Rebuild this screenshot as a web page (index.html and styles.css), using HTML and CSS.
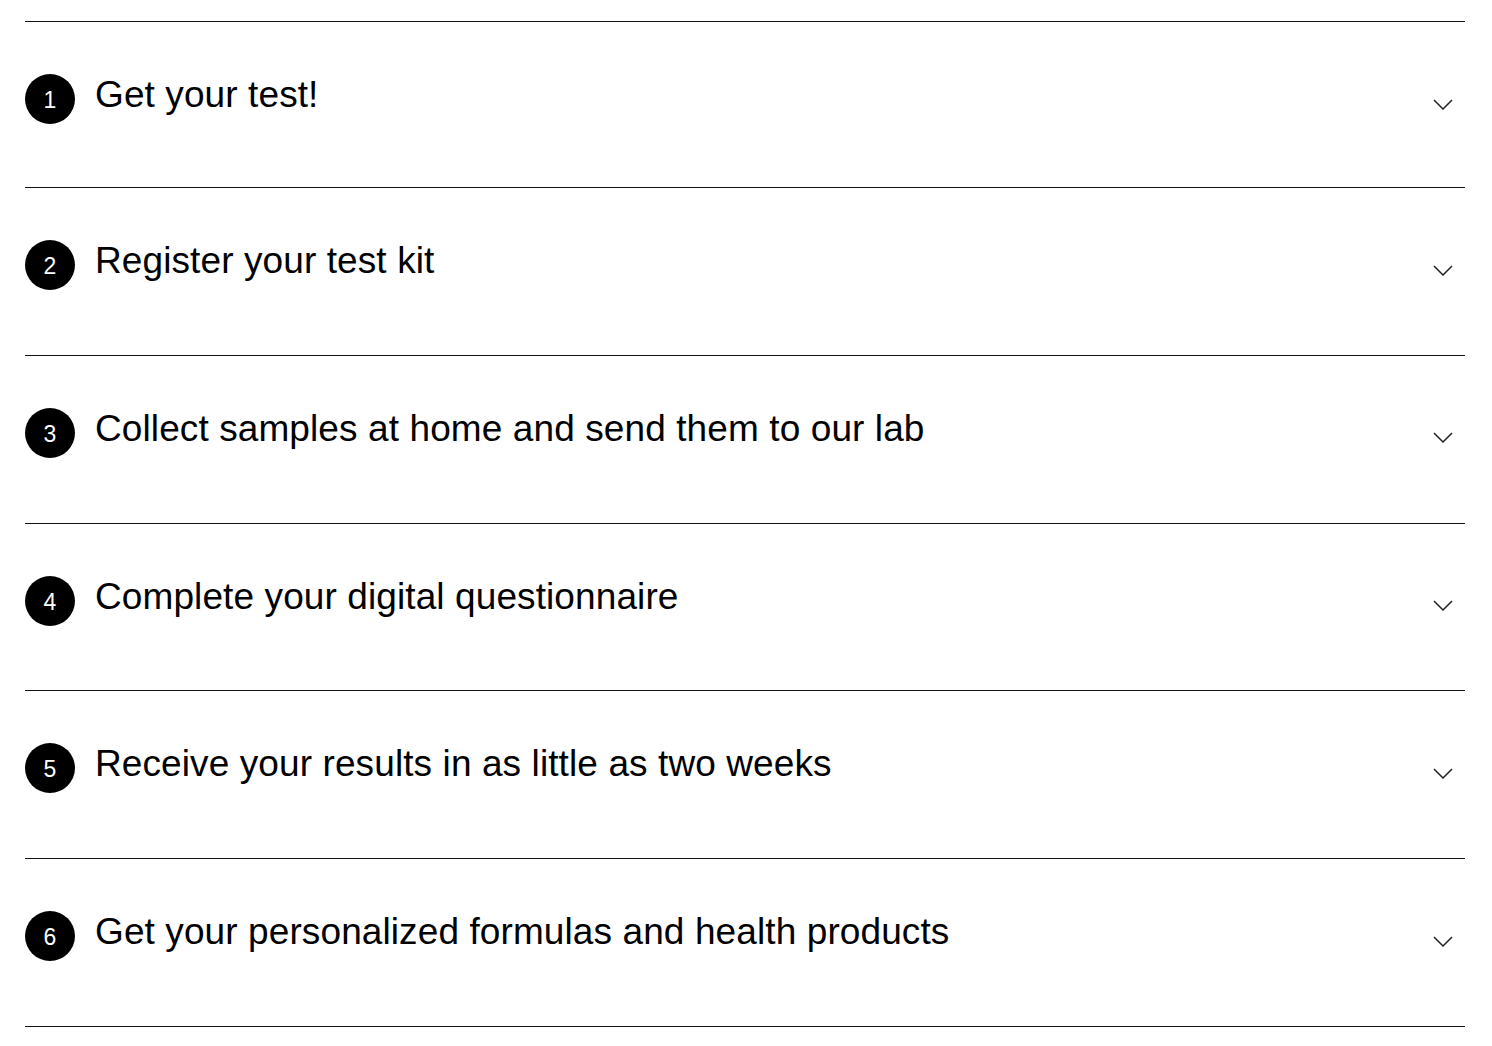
FILE: index.html
```html
<!DOCTYPE html>
<html lang="en">
<head>
    <meta charset="UTF-8">
    <meta name="viewport" content="width=device-width, initial-scale=1.0">
    <title>How it works</title>
    <link rel="stylesheet" href="styles.css">
</head>
<body>
    <div class="steps">
        <div class="step">
            <span class="num">1</span>
            <span class="title">Get your test!</span>
            <svg class="arrow" width="20" height="11" viewBox="0 0 20 11"><path d="M1 1l9 9 9-9" fill="none" stroke="#222" stroke-width="1.5"/></svg>
        </div>
        <div class="step">
            <span class="num">2</span>
            <span class="title">Register your test kit</span>
            <svg class="arrow" width="20" height="11" viewBox="0 0 20 11"><path d="M1 1l9 9 9-9" fill="none" stroke="#222" stroke-width="1.5"/></svg>
        </div>
        <div class="step">
            <span class="num">3</span>
            <span class="title">Collect samples at home and send them to our lab</span>
            <svg class="arrow" width="20" height="11" viewBox="0 0 20 11"><path d="M1 1l9 9 9-9" fill="none" stroke="#222" stroke-width="1.5"/></svg>
        </div>
        <div class="step">
            <span class="num">4</span>
            <span class="title">Complete your digital questionnaire</span>
            <svg class="arrow" width="20" height="11" viewBox="0 0 20 11"><path d="M1 1l9 9 9-9" fill="none" stroke="#222" stroke-width="1.5"/></svg>
        </div>
        <div class="step">
            <span class="num">5</span>
            <span class="title">Receive your results in as little as two weeks</span>
            <svg class="arrow" width="20" height="11" viewBox="0 0 20 11"><path d="M1 1l9 9 9-9" fill="none" stroke="#222" stroke-width="1.5"/></svg>
        </div>
        <div class="step">
            <span class="num">6</span>
            <span class="title">Get your personalized formulas and health products</span>
            <svg class="arrow" width="20" height="11" viewBox="0 0 20 11"><path d="M1 1l9 9 9-9" fill="none" stroke="#222" stroke-width="1.5"/></svg>
        </div>
    </div>
</body>
</html>
```

FILE: styles.css
```css
body{
    margin: 0;
    background: #fff;
    font-family: "Liberation Sans", Arial, sans-serif;
    color: #000;
}
.steps{
    padding: 21px 27px 0 25px;
}
.step{
    display: flex;
    align-items: center;
    height: 50px;
    padding: 52px 0 64.8px;
    border-top: 1px solid #111;
}
.step:first-child{
    padding-bottom: 63px;
}
.step:last-child{
    border-bottom: 1px solid #111;
}
.num{
    display: flex;
    align-items: center;
    justify-content: center;
    flex-shrink: 0;
    width: 50px;
    height: 50px;
    border-radius: 50%;
    background: #000;
    color: #fff;
    font-size: 23px;
    padding-top: 3px;
    box-sizing: border-box;
}
.title{
    flex: 1;
    margin-left: 20px;
    font-size: 37px;
    letter-spacing: 0.1px;
    margin-top: -8px;
}
.arrow{
    margin-right: 12px;
    margin-top: 10px;
}
```
